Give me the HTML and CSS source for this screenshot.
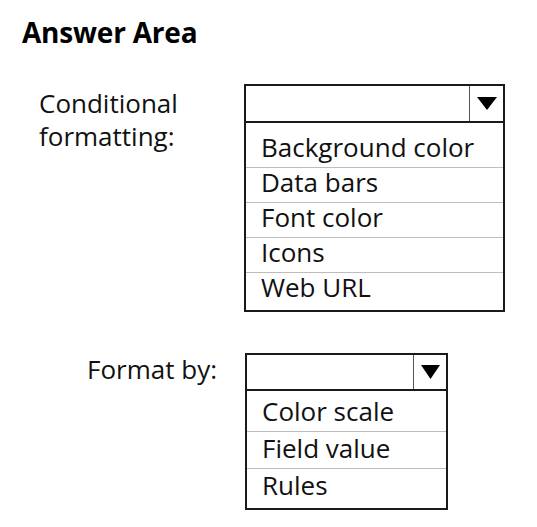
FILE: index.html
```html
<!DOCTYPE html>
<html lang="en">
<head>
<meta charset="utf-8">
<title>Answer Area</title>
<link rel="stylesheet" href="styles.css">
</head>
<body>
<div class="page">
  <h1 class="title">Answer Area</h1>

  <div class="row row-cond">
    <div class="label label-cond">Conditional<br>formatting:</div>
    <div class="dropdown dropdown-cond">
      <div class="dd-head">
        <div class="dd-value"></div>
        <div class="dd-arrow">
          <svg width="20" height="14" viewBox="0 0 20 14"><polygon points="0,0 20,0 10,13" fill="#000"/></svg>
        </div>
      </div>
      <ul class="dd-list">
        <li class="dd-item">Background color</li>
        <li class="dd-item">Data bars</li>
        <li class="dd-item">Font color</li>
        <li class="dd-item">Icons</li>
        <li class="dd-item">Web URL</li>
      </ul>
    </div>
  </div>

  <div class="row row-format">
    <div class="label label-format">Format by:</div>
    <div class="dropdown dropdown-format">
      <div class="dd-head">
        <div class="dd-value"></div>
        <div class="dd-arrow">
          <svg width="19" height="14" viewBox="0 0 19 14"><polygon points="0,0 19,0 9.5,14" fill="#000"/></svg>
        </div>
      </div>
      <ul class="dd-list">
        <li class="dd-item">Color scale</li>
        <li class="dd-item">Field value</li>
        <li class="dd-item">Rules</li>
      </ul>
    </div>
  </div>
</div>
</body>
</html>
```

FILE: styles.css
```css
html, body {
  margin: 0;
  padding: 0;
  background: #fff;
}

body {
  font-family: "Open Sans", Lato, sans-serif;
  font-variant-ligatures: none;
  color: #111;
  font-size: 26px;
}

.page {
  width: 537px;
}

.title {
  margin: 0;
  padding: 15px 0 0 22px;
  height: 34px;
  line-height: 34px;
  font-size: 28px;
  font-weight: 700;
  color: #000;
  letter-spacing: -0.2px;
}

.row {
  display: flex;
  align-items: flex-start;
}

.row-cond {
  margin-top: 35px;
  padding-left: 39px;
}

.row-format {
  margin-top: 41px;
  padding-left: 87px;
}

.label {
  line-height: 33px;
}

.label-cond {
  width: 205px;
  padding-top: 3px;
}

.label-format {
  width: 158px;
}

.dropdown {
  border: 2px solid #1a1a1a;
  background: #fff;
}

.dropdown-cond {
  width: 257px;
}

.dropdown-format {
  width: 199px;
}

.dd-head {
  display: flex;
  border-bottom: 2px solid #1a1a1a;
}

.dropdown-cond .dd-head {
  height: 35px;
}

.dropdown-format .dd-head {
  height: 34px;
}

.dd-value {
  flex: 1;
}

.dd-arrow {
  width: 33px;
  border-left: 1px solid #555;
  display: flex;
  align-items: center;
  justify-content: center;
}

.dropdown-format .dd-arrow {
  width: 32px;
}

.dd-list {
  list-style: none;
  margin: 0;
  padding: 0;
}

.dropdown-cond .dd-list {
  padding: 10px 0 3px;
}

.dropdown-format .dd-list {
  padding: 4px 0 3px;
}

.dd-item {
  padding-left: 15px;
  line-height: 28px;
  border-bottom: 1px solid #bdbdbd;
}

.dropdown-cond .dd-item {
  padding-bottom: 6px;
}

.dropdown-format .dd-item {
  padding-top: 2px;
  padding-bottom: 6px;
}

.dd-item:last-child {
  border-bottom: none;
}
```
